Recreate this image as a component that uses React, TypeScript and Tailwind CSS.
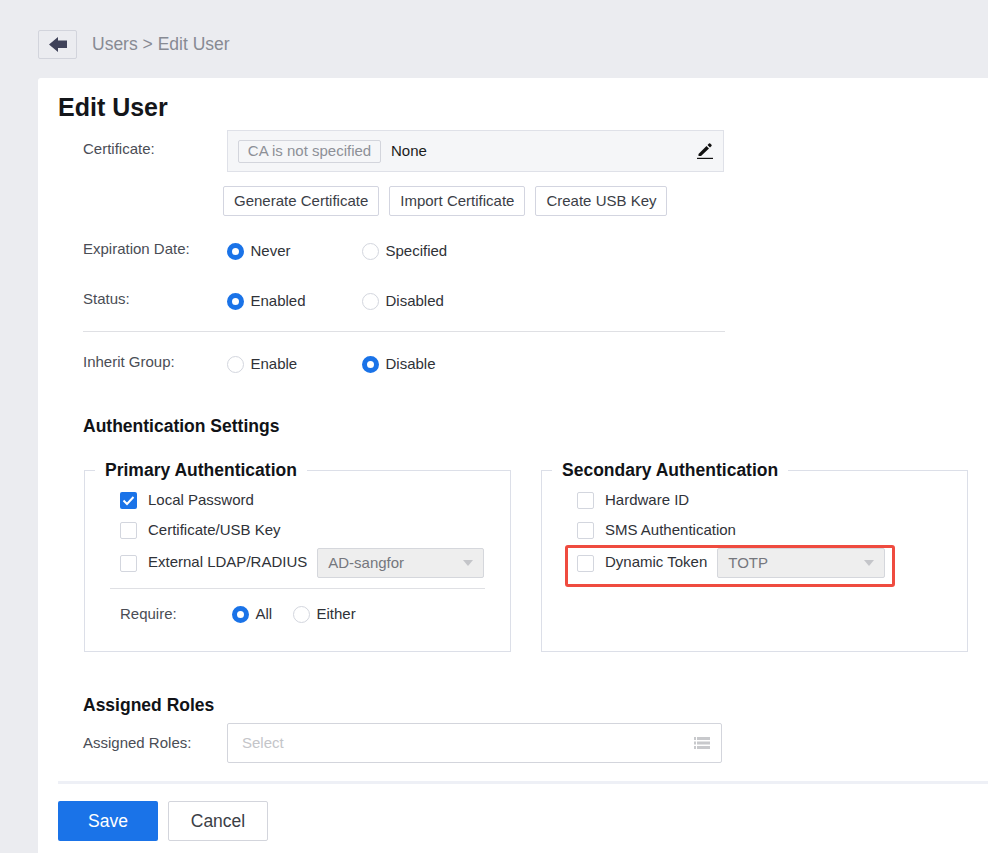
import { ReactNode } from "react"

function Radio({ checked, label, className = "" }: { checked?: boolean; label: string; className?: string }) {
  return (
    <label className={`flex items-center ${className}`}>
      {checked ? (
        <span className="block size-[17px] shrink-0 rounded-full border-[5px] border-[#1a73e8] bg-white" />
      ) : (
        <span className="block size-[17px] shrink-0 rounded-full border border-[#d3d6de] bg-white" />
      )}
      <span className="ml-[6.5px] text-[15px] text-[#2f3238]">{label}</span>
    </label>
  )
}

function Checkbox({ checked, label, raised }: { checked?: boolean; label: string; raised?: boolean }) {
  return (
    <label className="flex items-center">
      {checked ? (
        <span className="flex size-[17px] shrink-0 items-center justify-center rounded-[2px] bg-[#1a73e8]">
          <svg width="13" height="11" viewBox="0 0 13 11" fill="none">
            <path d="M1.5 5.5 L5 9 L11.5 2" stroke="white" strokeWidth="2" />
          </svg>
        </span>
      ) : (
        <span className="block size-[17px] shrink-0 rounded-[2px] border border-[#d3d6de] bg-white" />
      )}
      <span className={`ml-[11px] whitespace-nowrap text-[15px] text-[#2f3238] ${raised ? "-translate-y-px" : ""}`}>{label}</span>
    </label>
  )
}

function FormRow({ label, children, className = "" }: { label: string; children: ReactNode; className?: string }) {
  return (
    <div className={`flex h-5 items-center ${className}`}>
      <span className="relative -top-[2px] w-[144px] text-[15px] text-[#4a4d55]">{label}</span>
      {children}
    </div>
  )
}

function DisabledSelect({ value, className = "" }: { value: string; className?: string }) {
  return (
    <div className={`flex h-[30px] items-center justify-between rounded-[2px] border border-[#d5d7dc] bg-[#eeeeee] pl-[10px] pr-[10px] ${className}`}>
      <span className="text-[15px] text-[#75777d]">{value}</span>
      <svg width="10" height="6" viewBox="0 0 10 6">
        <path d="M0 0 H10 L5 6 Z" fill="#c4c5c9" />
      </svg>
    </div>
  )
}

function OutlineButton({ label }: { label: string }) {
  return (
    <button className="h-[30px] rounded-[2px] border border-[#d3d5e0] bg-white px-[10px] text-[15px] text-[#3b3e46]">
      {label}
    </button>
  )
}

function AuthBox({ title, children }: { title: string; children: ReactNode }) {
  return (
    <fieldset className="h-[192px] w-[427px] border border-[#dcdfe8] pl-[35px]">
      <legend className="-ml-[25px] h-5 px-[10px] text-[17.5px] leading-5 font-bold text-[#111317]">{title}</legend>
      {children}
    </fieldset>
  )
}

export default function App() {
  return (
    <div className="h-[853px] w-[988px] overflow-hidden bg-[#ebecf0] font-['Liberation_Sans',Arial,sans-serif]">
      {/* Breadcrumb */}
      <div className="flex h-[78px] items-start pl-[38px] pt-[30px]">
        <button className="flex h-[29px] w-[39px] items-center justify-center rounded-[2px] border border-[#d2d4dc]">
          <svg width="18" height="15" viewBox="0 0 18 15">
            <path d="M0 7.5 L9 0 V3.5 H18 V11 H9 V15 Z" fill="#3f4259" />
          </svg>
        </button>
        <span className="ml-[15px] text-[17.5px] leading-[28px] text-[#878a93]">Users &gt; Edit User</span>
      </div>

      {/* Card */}
      <div className="ml-[38px] h-[775px] rounded-tl-[3px] bg-white pl-[20px] pt-[14px]">
        <h1 className="h-[30px] text-[25px] leading-[30px] font-bold text-[#14161a]">Edit User</h1>

        <div className="pl-[25px]">
          <div className="mt-2 flex">
            <span className="w-[144px] pt-[11px] text-[15px] leading-4 text-[#4a4d55]">Certificate:</span>
            <div className="flex h-[42px] w-[497px] items-center border border-[#dfe1e8] bg-[#f5f6f8] pl-[10px] pr-[10px]">
              <span className="flex h-[23px] w-[143px] items-center justify-center rounded-[2px] border border-[#d3d5dc] text-[15px] text-[#8d9097]">
                CA is not specified
              </span>
              <span className="ml-[10px] text-[15px] text-[#1b1c20]">None</span>
              <svg className="ml-auto" width="16" height="16" viewBox="0 0 16 16">
                <path d="M1.5 11 L9.5 3 L12 5.5 L4 13 H1.5 Z M10.5 2 L12 0.5 Q12.6 0 13.2 0.5 L14.5 1.8 Q15 2.4 14.5 3 L13 4.5 Z" fill="#111" />
                <rect x="0" y="14.8" width="16" height="1.2" fill="#111" />
              </svg>
            </div>
          </div>

          <div className="ml-[140px] mt-[14px] flex gap-[10px]">
            <OutlineButton label="Generate Certificate" />
            <OutlineButton label="Import Certificate" />
            <OutlineButton label="Create USB Key" />
          </div>

          <FormRow label="Expiration Date:" className="mt-[25px]">
            <Radio checked label="Never" className="w-[135px]" />
            <Radio label="Specified" />
          </FormRow>
          <FormRow label="Status:" className="mt-[30px]">
            <Radio checked label="Enabled" className="w-[135px]" />
            <Radio label="Disabled" />
          </FormRow>

          <div className="mt-5 h-px w-[642px] bg-[#dfe0e4]" />

          <FormRow label="Inherit Group:" className="mt-[22px]">
            <Radio label="Enable" className="w-[135px]" />
            <Radio checked label="Disable" />
          </FormRow>

          <h2 className="mt-[41px] h-5 text-[17.5px] leading-[22px] font-bold text-[#111317]">Authentication Settings</h2>

          <div className="ml-px mt-[25px] flex gap-[30px]">
            <AuthBox title="Primary Authentication">
              <div className="mt-[10px] flex h-5 items-center">
                <Checkbox checked label="Local Password" />
              </div>
              <div className="mt-[10px] flex h-5 items-center">
                <Checkbox label="Certificate/USB Key" />
              </div>
              <div className="mt-2 flex items-center">
                <Checkbox raised label="External LDAP/RADIUS" />
                <DisabledSelect value="AD-sangfor" className="ml-[10px] w-[167px]" />
              </div>
              <div className="-ml-[10px] mt-[10px] h-px w-[375px] bg-[#dfe0e4]" />
              <div className="mt-[15px] flex h-5 items-center">
                <span className="w-[112px] text-[15px] text-[#4a4d55]">Require:</span>
                <Radio checked label="All" className="w-[61px]" />
                <Radio label="Either" />
              </div>
            </AuthBox>

            <AuthBox title="Secondary Authentication">
              <div className="mt-[10px] flex h-5 items-center">
                <Checkbox label="Hardware ID" />
              </div>
              <div className="mt-[10px] flex h-5 items-center">
                <Checkbox label="SMS Authentication" />
              </div>
              <div className="relative mt-2 flex items-center">
                <Checkbox raised label="Dynamic Token" />
                <DisabledSelect value="TOTP" className="ml-[10px] w-[168px]" />
                {/* Red annotation box from the screenshot */}
                <div className="absolute -left-[12px] -top-[3px] h-[42px] w-[330px] rounded-[3px] border-[3px] border-[#ef4b3f]" />
              </div>
            </AuthBox>
          </div>

          <h2 className="mt-[43px] h-5 text-[17.5px] leading-5 font-bold text-[#111317]">Assigned Roles</h2>

          <div className="mt-2 flex">
            <span className="flex h-10 w-[144px] items-center text-[15px] text-[#4a4d55]">Assigned Roles:</span>
            <div className="flex h-10 w-[495px] items-center justify-between rounded-[2px] border border-[#d3d5dc] bg-white pl-[14px] pr-[11px]">
              <span className="text-[15px] text-[#c4c5c9]">Select</span>
              <svg width="16" height="14" viewBox="0 0 16 14" fill="#c8c9cc">
                <rect x="0" y="1" width="2" height="3" />
                <rect x="3" y="1" width="13" height="3" />
                <rect x="0" y="5.5" width="2" height="3" />
                <rect x="3" y="5.5" width="13" height="3" />
                <rect x="0" y="10" width="2" height="3" />
                <rect x="3" y="10" width="13" height="3" />
              </svg>
            </div>
          </div>
        </div>

        <div className="mt-[18px] h-[3px] bg-[#eef0f6]" />

        <div className="mt-[17px] flex gap-[10px]">
          <button className="h-10 w-[100px] rounded-[2px] bg-[#1a73e8] text-[17.5px] text-white">Save</button>
          <button className="h-10 w-[100px] rounded-[2px] border border-[#d3d5dc] bg-white text-[17.5px] text-[#3b3e46]">Cancel</button>
        </div>
      </div>
    </div>
  )
}
